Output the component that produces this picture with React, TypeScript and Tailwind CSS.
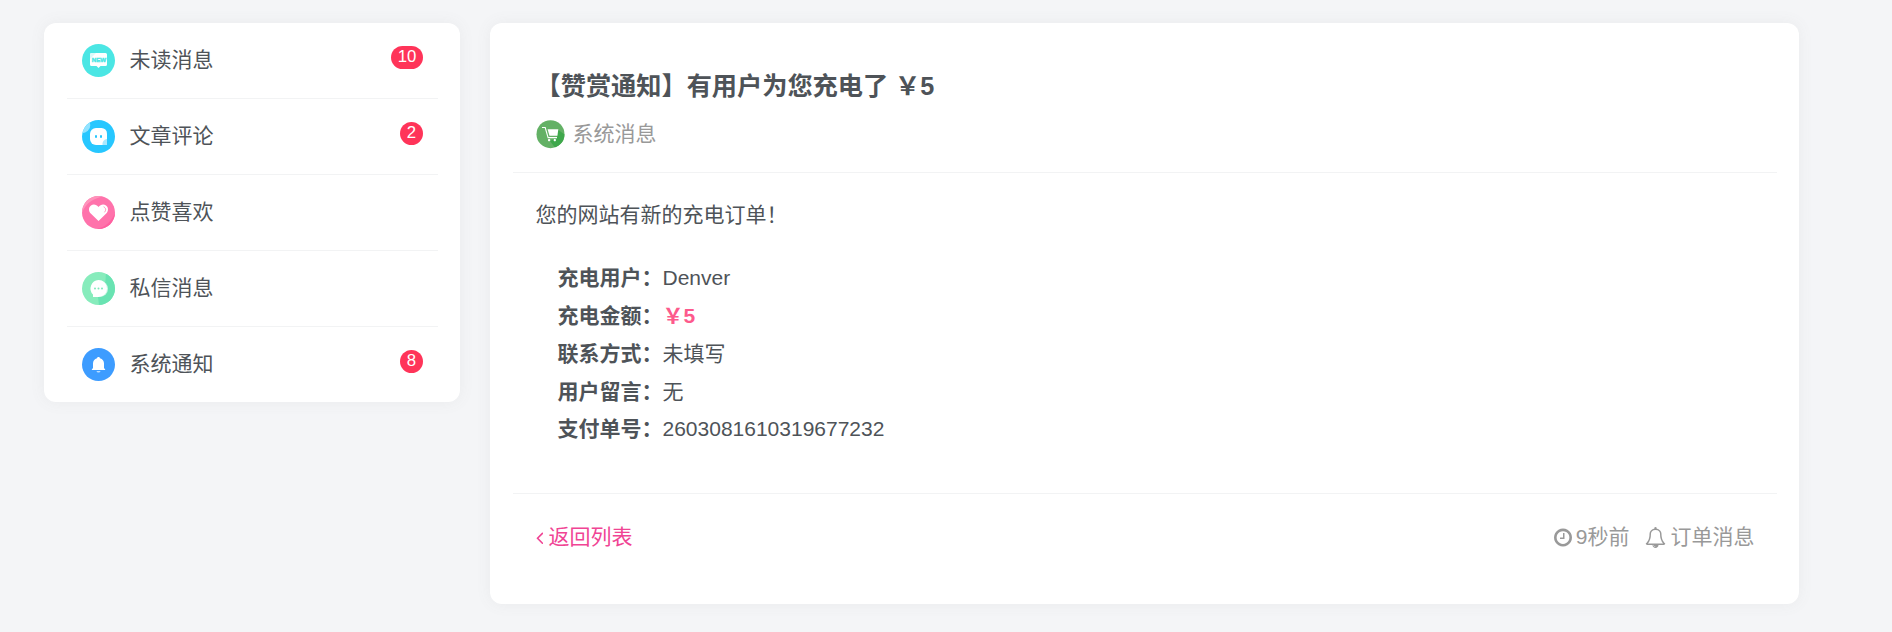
import React from 'react';

interface MessageItem {
  label: string;
  count?: number;
  icon: React.ReactNode;
}

function NewIcon() {
  return (
    <svg viewBox="0 0 33 33" className="size-full">
      <circle cx="16.5" cy="16.5" r="16.5" fill="#4be6e4" />
      <path d="M9.5 9h14a1.5 1.5 0 0 1 1.5 1.5v10a1.5 1.5 0 0 1-1.5 1.5h-5l-2 2-2-2h-5A1.5 1.5 0 0 1 8 20.5v-10A1.5 1.5 0 0 1 9.5 9z" fill="#fff" />
      <path d="M8 10.5A1.5 1.5 0 0 1 9.5 9H14l-6 6z" fill="#dbfaf9" />
      <text x="9.8" y="18.3" textLength="14.4" lengthAdjust="spacing" fontSize="6.2" fontWeight="700" fill="#4be6e4" stroke="#4be6e4" strokeWidth="0.4">NEW</text>
    </svg>
  );
}

function CommentIcon() {
  return (
    <svg viewBox="0 0 33 33" className="size-full">
      <clipPath id="comment-clip">
        <circle cx="16.5" cy="16.5" r="16.5" />
      </clipPath>
      <g clipPath="url(#comment-clip)">
        <rect width="33" height="33" fill="#27c7ff" />
        <circle cx="0" cy="5" r="8.3" fill="#93e3ff" />
      </g>
      <path d="M14 8h5.5a5.500 5.500 0 0 1 5.500 5.500V25H14a6 6 0 0 1-6-6v-5a6 6 0 0 1 6-6z" fill="#fff" />
      <path d="M25 19v6h-4.500a5 5 0 0 1 4.500-6z" fill="#a8e8ff" />
      <rect x="13" y="15" width="2" height="3" rx="1" fill="#27c7ff" />
      <rect x="18" y="15" width="2" height="3" rx="1" fill="#27c7ff" />
    </svg>
  );
}

function LikeIcon() {
  return (
    <svg viewBox="0 0 33 33" className="size-full">
      <clipPath id="like-clip">
        <circle cx="16.5" cy="16.5" r="16.5" />
      </clipPath>
      <g clipPath="url(#like-clip)">
        <rect width="33" height="33" fill="#ff72ab" />
        <path d="M0 0h21C12 3 4 6 0 17z" fill="#ff93bb" />
        <path d="M33 17v16H15c8-2 14-7 18-16z" fill="#ff60a0" />
      </g>
      <path d="M16.500 25 9 17.800c-3-3-2.300-6.800 0-8.400 2.600-1.700 5.700-.8 7.500 1.600 1.800-2.400 4.900-3.300 7.500-1.600 2.300 1.600 3 5.400 0 8.400z" fill="#fff" />
      <path d="M22 11c2 1 2.300 3 .7 5" fill="none" stroke="#ff8cba" strokeWidth="1" strokeLinecap="round" />
    </svg>
  );
}

function ChatIcon() {
  return (
    <svg viewBox="0 0 33 33" className="size-full">
      <clipPath id="chat-clip">
        <circle cx="16.5" cy="16.5" r="16.5" />
      </clipPath>
      <g clipPath="url(#chat-clip)">
        <rect width="33" height="33" fill="#87ecbc" />
        <path d="M24 0h9v33H17l-1-8 7-9z" fill="#69e3b2" />
      </g>
      <circle cx="18" cy="16.800" r="8" fill="#d0f7e6" />
      <path d="M16.500 8a8.500 8.500 0 1 1 0 17H11v-2.500A8.500 8.500 0 0 1 16.500 8z" fill="#fff" />
      <circle cx="13" cy="16.500" r="1" fill="#7fe9bb" />
      <circle cx="16.500" cy="16.500" r="1" fill="#7fe9bb" />
      <circle cx="20" cy="16.500" r="1" fill="#7fe9bb" />
    </svg>
  );
}

function NoticeIcon() {
  return (
    <svg viewBox="0 0 33 33" className="size-full">
      <circle cx="16.5" cy="16.5" r="16.5" fill="#3d9cff" />
      <path d="M16.500 9c.8 0 1.300.5 1.500 1.200 2.600.6 4 2.700 4 5.300v4.500l1.200 1.500v.5H9.800v-.5L11 20v-4.500c0-2.600 1.400-4.700 4-5.300.2-.7.700-1.200 1.500-1.200z" fill="#fff" />
      <path d="M14.500 23h4c-.3 1-1.100 1.600-2 1.600s-1.700-.6-2-1.600z" fill="#b9dcff" />
    </svg>
  );
}

function CartAvatar() {
  return (
    <svg viewBox="0 0 29 29" className="size-[29px] shrink-0">
      <clipPath id="cart-clip">
        <circle cx="14.5" cy="14.2" r="14" />
      </clipPath>
      <g clipPath="url(#cart-clip)">
        <rect width="29" height="29" fill="#63b165" />
        <path d="M22.300 10l7 5v14H20l-6-8 7-3z" fill="#3fa84c" />
      </g>
      <path d="M6 7.500h3.200l2.900 10.100H21" fill="none" stroke="#fff" strokeWidth="1.1" />
      <path d="M11.600 9.200h10.700l-.9 6.600h-7.900z" fill="#fff" />
      <rect x="12" y="19" width="2.200" height="2.200" rx=".7" fill="#fff" />
      <rect x="17.700" y="19" width="2.200" height="2.200" rx=".7" fill="#fff" />
    </svg>
  );
}

function AngleLeft() {
  return (
    <svg viewBox="0 0 640 1792" fill="currentColor" className="h-[21px] w-[7.5px]">
      <path d="M627 544q0 13-10 23l-393 393 393 393q10 10 10 23t-10 23l-50 50q-10 10-23 10t-23-10l-466-466q-10-10-10-23t10-23l466-466q10-10 23-10t23 10l50 50q10 10 10 23z" />
    </svg>
  );
}

function ClockIcon() {
  return (
    <svg viewBox="0 0 1536 1792" fill="currentColor" className="h-[21px] w-[18px]">
      <path d="M896 544v448q0 14-9 23t-23 9h-320q-14 0-23-9t-9-23v-64q0-14 9-23t23-9h224v-352q0-14 9-23t23-9h64q14 0 23 9t9 23zm416 352q0-148-73-273t-198-198-273-73-273 73-198 198-73 273 73 273 198 198 273 73 273-73 198-198 73-273zm224 0q0 209-103 385.5t-279.5 279.5-385.5 103-385.5-103-279.5-279.5-103-385.5 103-385.5 279.5-279.5 385.5-103 385.5 103 279.5 279.5 103 385.5z" />
    </svg>
  );
}

function BellIcon() {
  return (
    <svg viewBox="0 0 1792 1792" fill="currentColor" className="size-[21px]">
      <path d="M912 1696q0-16-16-16-59 0-101.5-42.5t-42.5-101.5q0-16-16-16t-16 16q0 73 51.5 124.5t124.5 51.5q16 0 16-16zm-666-288h1300q-266-300-266-832 0-51-24-105t-69-103-121.5-80.5-169.5-31.5-169.5 31.5-121.5 80.5-69 103-24 105q0 532-266 832zm1482 0q0 52-38 90t-90 38h-448q0 106-75 181t-181 75-181-75-75-181h-448q-52 0-90-38t-38-90q50-42 91-88t85-119.5 74.5-158.5 50-206 19.5-260q0-152 117-282.5t307-158.5q-8-19-8-39 0-40 28-68t68-28 68 28 28 68q0 20-8 39 190 28 307 158.5t117 282.5q0 139 19.5 260t50 206 74.5 158.5 85 119.5 91 88z" />
    </svg>
  );
}

const menu: MessageItem[] = [
  { label: '未读消息', count: 10, icon: <NewIcon /> },
  { label: '文章评论', count: 2, icon: <CommentIcon /> },
  { label: '点赞喜欢', icon: <LikeIcon /> },
  { label: '私信消息', icon: <ChatIcon /> },
  { label: '系统通知', count: 8, icon: <NoticeIcon /> },
];

const details = [
  { label: '充电用户', value: 'Denver' },
  { label: '充电金额', value: '￥5', highlight: true },
  { label: '联系方式', value: '未填写' },
  { label: '用户留言', value: '无' },
  { label: '支付单号', value: '2603081610319677232' },
];

export default function App() {
  return (
    <div className="flex min-h-screen items-start gap-[30px] bg-[#f4f5f7] pt-[23px] pl-[44px] font-['Liberation_Sans','Noto_Sans_CJK_SC',sans-serif] text-[21px] leading-[30px] text-[#4e5358]">
      <aside className="w-[416px] shrink-0 rounded-xl bg-white pr-[22px] pl-[23px] shadow-[0_0_15px_rgba(116,116,116,0.08)]">
        {menu.map((item) => (
          <div
            key={item.label}
            className="flex h-[76px] items-start border-b border-[#f2f3f4] px-[15px] last:h-[75px] last:border-b-0"
          >
            <span className="mt-[21px] size-[33px] shrink-0">{item.icon}</span>
            <span className="mt-[22px] ml-[14.5px]">{item.label}</span>
            {item.count && (
              <span className="mt-[23px] ml-auto h-[23px] min-w-[23px] rounded-full bg-[#ff3459] px-[6.6px] text-center text-[16.8px] leading-[21px] text-white">
                {item.count}
              </span>
            )}
          </div>
        ))}
      </aside>

      <main className="h-[581px] w-[1309px] shrink-0 rounded-xl bg-white pr-[22px] pl-[23px] shadow-[0_0_15px_rgba(116,116,116,0.08)]">
        <header className="h-[150px] border-b border-[#f2f3f4] px-[22.5px] pt-[45px]">
          <h1 className="text-[25.2px] leading-[36px] font-bold">【赞赏通知】有用户为您充电了 ￥5</h1>
          <div className="mt-[15px] flex items-center gap-[8px] text-[#999]">
            <CartAvatar />
            <span>系统消息</span>
          </div>
        </header>

        <section className="h-[321px] border-b border-[#f2f3f4] px-[22.5px] pt-[23px] leading-[37.8px]">
          <p>您的网站有新的充电订单！</p>
          <ul className="mt-[25.5px] pl-[22px]">
            {details.map((row) => (
              <li key={row.label}>
                <b>{row.label}：</b>
                {row.highlight ? <b className="text-[#fd5a8c]">{row.value}</b> : row.value}
              </li>
            ))}
          </ul>
        </section>

        <footer className="flex items-center justify-between px-[22.5px] pt-[28px]">
          <a href="#" className="flex items-center gap-[5.5px] text-[#f04494]">
            <AngleLeft />
            返回列表
          </a>
          <div className="flex items-center text-[#999]">
            <ClockIcon />
            <span className="ml-[4px]">9秒前</span>
            <span className="mr-[5px] ml-[15px]">
              <BellIcon />
            </span>
            订单消息
          </div>
        </footer>
      </main>
    </div>
  );
}
